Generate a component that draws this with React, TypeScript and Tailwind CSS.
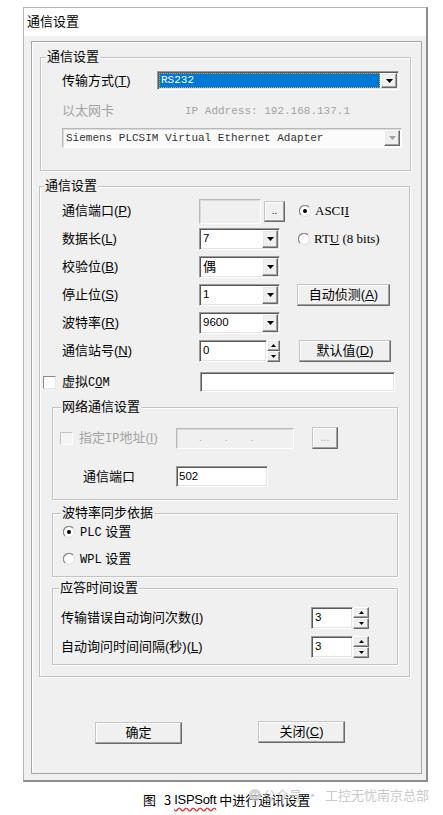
import React from 'react';

const sunken =
  'border border-t-[#9a9a9a] border-l-[#9a9a9a] border-b-[#ffffff] border-r-[#ffffff] shadow-[inset_1px_1px_0_#5a5a5a,inset_-1px_-1px_0_#e3e3e3]';
const sunkenSoft =
  'border border-t-[#b9b9b9] border-l-[#b9b9b9] border-b-[#ffffff] border-r-[#ffffff] shadow-[inset_1px_1px_0_#dadada]';
const raised =
  'border border-t-[#ffffff] border-l-[#ffffff] border-b-[#696969] border-r-[#696969] shadow-[inset_-1px_-1px_0_#a0a0a0,inset_1px_1px_0_#e8e8e8]';
const button =
  'border border-t-[#c6c6c6] border-l-[#c6c6c6] border-b-[#6a6a6a] border-r-[#6a6a6a] shadow-[inset_-1px_-1px_0_#a0a0a0,inset_1px_1px_0_#ffffff]';

function Arrow({ disabled }: { disabled?: boolean }) {
  return (
    <div className={`${raised} w-[16px] h-full flex items-center justify-center bg-[#f0f0f0]`}>
      <svg width="7" height="4" viewBox="0 0 7 4">
        <polygon points="0,0 7,0 3.5,4" fill={disabled ? '#a0a0a0' : '#000'} />
      </svg>
    </div>
  );
}

function Select({ value, className }: { value: string; className: string }) {
  return (
    <div className={`${sunken} ${className} bg-white flex items-stretch p-[1px]`}>
      <div className="flex-1 flex items-center pl-[2px] text-[11.5px] leading-none">{value}</div>
      <Arrow />
    </div>
  );
}

function SpinButtons() {
  return (
    <div className="flex flex-col h-full">
      <div className={`${raised} flex-1 w-full flex items-center justify-center bg-[#f0f0f0]`}>
        <svg width="5" height="3" viewBox="0 0 5 3">
          <polygon points="2.5,0 5,3 0,3" fill="#000" />
        </svg>
      </div>
      <div className={`${raised} flex-1 w-full flex items-center justify-center bg-[#f0f0f0]`}>
        <svg width="5" height="3" viewBox="0 0 5 3">
          <polygon points="0,0 5,0 2.5,3" fill="#000" />
        </svg>
      </div>
    </div>
  );
}

function Spin({ value, inputW, btnW }: { value: string; inputW: string; btnW: string }) {
  return (
    <div className="flex h-[22px]">
      <div className={`${sunken} ${inputW} bg-white flex items-center pl-[3px] text-[11.5px] leading-none`}>
        {value}
      </div>
      <div className={`${btnW} h-full`}>
        <SpinButtons />
      </div>
    </div>
  );
}

function Radio({ checked }: { checked?: boolean }) {
  return (
    <svg width="12" height="12" viewBox="0 0 12 12" className="shrink-0">
      <circle cx="6" cy="6" r="5.4" fill="#fff" stroke="#dcdcdc" strokeWidth="1" />
      <path d="M2 10 A5.4 5.4 0 0 1 10 2" stroke="#8a8a8a" strokeWidth="1.2" fill="none" />
      {checked && <circle cx="6" cy="6" r="2" fill="#000" />}
    </svg>
  );
}

function Check({ disabled }: { disabled?: boolean }) {
  return (
    <span
      className={`block w-[13px] h-[13px] shrink-0 border ${
        disabled
          ? 'bg-[#f4f4f4] border-t-[#c4c4c4] border-l-[#c4c4c4] border-b-[#ffffff] border-r-[#ffffff]'
          : 'bg-white border-t-[#8a8a8a] border-l-[#8a8a8a] border-b-[#e6e6e6] border-r-[#e6e6e6]'
      }`}
    />
  );
}

function Group({
  title,
  className,
  legend,
  children,
}: {
  title: string;
  className: string;
  legend: string;
  children?: React.ReactNode;
}) {
  return (
    <div
      className={`relative border border-[#c3c3c3] shadow-[inset_1px_1px_0_#ffffff,1px_1px_0_#ffffff] ${className}`}
    >
      <span className={`absolute top-[-9px] ${legend} px-[1px] bg-[#f0f0f0] leading-[16px]`}>{title}</span>
      {children}
    </div>
  );
}

function Row({ label, children }: { label: React.ReactNode; children?: React.ReactNode }) {
  return (
    <div className="h-[28px] flex items-center pl-[22px]">
      <div className="w-[137px]">{label}</div>
      {children}
    </div>
  );
}

export default function App() {
  return (
    <div className="relative w-[443px] h-[815px] overflow-hidden bg-white text-black text-[13px] leading-[16px] font-['Liberation_Sans','Noto_Sans_CJK_SC',sans-serif]">
      {/* dialog window */}
      <div className="ml-[23px] mt-[7px] w-[405px] h-[775px] flex flex-col border-t border-l border-t-[#b4b4b4] border-l-[#b4b4b4] border-r-2 border-b-2 border-r-[#8c8c8c] border-b-[#8c8c8c]">
        <div className="h-[28px] bg-white pl-[3px] flex items-center shrink-0">通信设置</div>

        <div className="flex-1 bg-[#f0f0f0] pt-[5px] pl-[7px] pr-[4px] pb-[6px] flex">
          <div className="flex-1 border border-[#a6a6a6] shadow-[inset_1px_1px_0_#ffffff]">
            {/* group 1 */}
            <Group title="通信设置" className="mt-[15px] ml-[8px] w-[371px] h-[114px]" legend="left-[5px]">
              <div className="mt-[13px] h-[19px] flex items-center pl-[21px]">
                <div className="w-[95px]">
                  传输方式(<u>T</u>)
                </div>
                <div className={`${sunken} w-[242px] h-[19px] bg-white flex items-stretch p-[1px]`}>
                  <div className="flex-1 mr-[1px] bg-[#0078d7] border border-dotted border-[#d9a441] flex items-center pl-[1px] text-white font-['Liberation_Mono',monospace] text-[11px] leading-none">
                    RS232
                  </div>
                  <Arrow />
                </div>
              </div>
              <div className="mt-[12px] h-[18px] flex items-center pl-[21px] text-[#a3a3a3]">
                <div className="w-[123px]">以太网卡</div>
                <span className="font-['Liberation_Mono',monospace] text-[11px]">IP Address: 192.168.137.1</span>
              </div>
              <div className="mt-[8px] pl-[21px]">
                <div className={`${sunkenSoft} w-[340px] h-[20px] bg-[#fbfbfb] flex items-stretch p-[1px]`}>
                  <div className="flex-1 flex items-center pl-[2px] text-[#333] font-['Liberation_Mono',monospace] text-[11px] leading-none">
                    Siemens PLCSIM Virtual Ethernet Adapter
                  </div>
                  <Arrow disabled />
                </div>
              </div>
            </Group>

            {/* group 2 */}
            <Group title="通信设置" className="mt-[15px] ml-[7px] w-[371px] h-[491px]" legend="left-[4px]">
              <div className="mt-[10px]">
                <Row
                  label={
                    <>
                      通信端口(<u>P</u>)
                    </>
                  }
                >
                  <div className={`${sunkenSoft} w-[62px] h-[25px] bg-[#f0f0f0]`} />
                  <div className={`${button} ml-[3px] w-[21px] h-[21px] bg-[#f0f0f0] flex items-center justify-center text-[10px] leading-none`}>
                    ..
                  </div>
                  <div className="ml-[14px] flex items-center gap-[4px]">
                    <Radio checked />
                    <span className="font-['Liberation_Serif',serif] text-[13px]">
                      ASCI<u>I</u>
                    </span>
                  </div>
                </Row>
                <Row
                  label={
                    <>
                      数据长(<u>L</u>)
                    </>
                  }
                >
                  <Select value="7" className="w-[81px] h-[22px]" />
                  <div className="ml-[18px] flex items-center gap-[4px]">
                    <Radio />
                    <span className="font-['Liberation_Serif',serif] text-[13px]">
                      RT<u>U</u> (8 bits)
                    </span>
                  </div>
                </Row>
                <Row
                  label={
                    <>
                      校验位(<u>B</u>)
                    </>
                  }
                >
                  <div className={`${sunken} w-[81px] h-[22px] bg-white flex items-stretch p-[1px]`}>
                    <div className="flex-1 flex items-center pl-[2px]">偶</div>
                    <Arrow />
                  </div>
                </Row>
                <Row
                  label={
                    <>
                      停止位(<u>S</u>)
                    </>
                  }
                >
                  <Select value="1" className="w-[81px] h-[22px]" />
                  <div className={`${button} ml-[17px] w-[93px] h-[22px] bg-[#f0f0f0] flex items-center justify-center`}>
                    自动侦测(<u>A</u>)
                  </div>
                </Row>
                <Row
                  label={
                    <>
                      波特率(<u>R</u>)
                    </>
                  }
                >
                  <Select value="9600" className="w-[81px] h-[22px]" />
                </Row>
                <Row
                  label={
                    <>
                      通信站号(<u>N</u>)
                    </>
                  }
                >
                  <Spin value="0" inputW="w-[68px]" btnW="w-[13px]" />
                  <div className={`${button} ml-[19px] w-[92px] h-[22px] bg-[#f0f0f0] flex items-center justify-center`}>
                    默认值(<u>D</u>)
                  </div>
                </Row>
              </div>

              <div className="mt-[6px] h-[22px] flex items-center pl-[3px]">
                <Check />
                <div className="ml-[6px] w-[138px]">
                  虚拟<span className="font-['Liberation_Mono',monospace] text-[12px]">C<u>O</u>M</span>
                </div>
                <div className={`${sunken} w-[195px] h-[20px] bg-white`} />
              </div>

              <Group title="网络通信设置" className="mt-[14px] ml-[12px] w-[346px] h-[93px]" legend="left-[8px]">
                <div className="mt-[19px] h-[22px] flex items-center pl-[7px]">
                  <Check disabled />
                  <div className="ml-[6px] w-[97px] text-[#a3a3a3]">
                    指定<span className="font-['Liberation_Mono',monospace] text-[12px]">IP</span>地址(<u>I</u>)
                  </div>
                  <div className={`${sunkenSoft} w-[118px] h-[21px] bg-[#f0f0f0] flex items-center text-[#a0a0a0] text-[10px] leading-none`}>
                    <span className="ml-[22px]">.</span>
                    <span className="ml-[23px]">.</span>
                    <span className="ml-[23px]">.</span>
                  </div>
                  <div className={`${button} ml-[18px] w-[26px] h-[22px] bg-[#f0f0f0] flex items-center justify-center text-[10px] leading-none text-[#a0a0a0]`}>
                    ...
                  </div>
                </div>
                <div className="mt-[17px] h-[21px] flex items-center pl-[30px]">
                  <div className="w-[93px]">通信端口</div>
                  <div className={`${sunken} w-[92px] h-[21px] bg-white flex items-center pl-[2px] text-[11.5px] leading-none`}>
                    502
                  </div>
                </div>
              </Group>

              <Group title="波特率同步依据" className="mt-[13px] ml-[12px] w-[346px] h-[64px]" legend="left-[8px]">
                <div className="mt-[8px] h-[20px] flex items-center pl-[10px] gap-[5px]">
                  <Radio checked />
                  <span>
                    <span className="font-['Liberation_Mono',monospace] text-[12px]">PLC</span> 设置
                  </span>
                </div>
                <div className="mt-[7px] h-[20px] flex items-center pl-[10px] gap-[5px]">
                  <Radio />
                  <span>
                    <span className="font-['Liberation_Mono',monospace] text-[12px]">WPL</span> 设置
                  </span>
                </div>
              </Group>

              <Group title="应答时间设置" className="mt-[11px] ml-[12px] w-[346px] h-[77px]" legend="left-[6px]">
                <div className="mt-[18px] h-[22px] flex items-center pl-[8px]">
                  <div className="w-[250px]">
                    传输错误自动询问次数(<u>I</u>)
                  </div>
                  <Spin value="3" inputW="w-[42px]" btnW="w-[16px]" />
                </div>
                <div className="mt-[7px] h-[22px] flex items-center pl-[8px]">
                  <div className="w-[250px]">
                    自动询问时间间隔(秒)(<u>L</u>)
                  </div>
                  <Spin value="3" inputW="w-[42px]" btnW="w-[16px]" />
                </div>
              </Group>
            </Group>

            {/* buttons */}
            <div className="mt-[45px] ml-[63px] flex items-start">
              <div className={`${button} w-[87px] h-[22px] bg-[#f0f0f0] flex items-center justify-center`}>确定</div>
              <div className={`${button} ml-[76px] mt-[-1px] w-[87px] h-[22px] bg-[#f0f0f0] flex items-center justify-center`}>
                关闭(<u>C</u>)
              </div>
            </div>
          </div>
        </div>
      </div>

      {/* caption */}
      <div className="mt-[9px] ml-[143px] flex items-center h-[18px] text-[13px] font-['Noto_Sans_CJK_SC',sans-serif]">
        <span>图</span>
        <span className="ml-[8px]">3</span>
        <span className="ml-[3px] underline decoration-wavy decoration-[#e03030] underline-offset-[3px] font-['Liberation_Sans',sans-serif] tracking-[-0.3px]">
          ISPSoft
        </span>
        <span className="ml-[3px]">中进行通讯设置</span>
      </div>

      {/* watermark */}
      <div className="absolute left-[249px] top-[786px] flex items-center text-[13px] leading-[18px] text-[#bdbdbd] opacity-80 font-['Noto_Sans_CJK_SC',sans-serif]">
        <svg width="12" height="12" viewBox="0 0 12 12" className="mr-[2px]">
          <circle cx="6" cy="6" r="6" fill="#c8c8c8" />
          <circle cx="4.2" cy="5" r="0.9" fill="#fff" />
          <circle cx="7.8" cy="5" r="0.9" fill="#fff" />
        </svg>
        <span>公众号</span>
        <span className="ml-[4px]">·</span>
        <span className="ml-[6px]">工控无忧南京总部</span>
      </div>
    </div>
  );
}
